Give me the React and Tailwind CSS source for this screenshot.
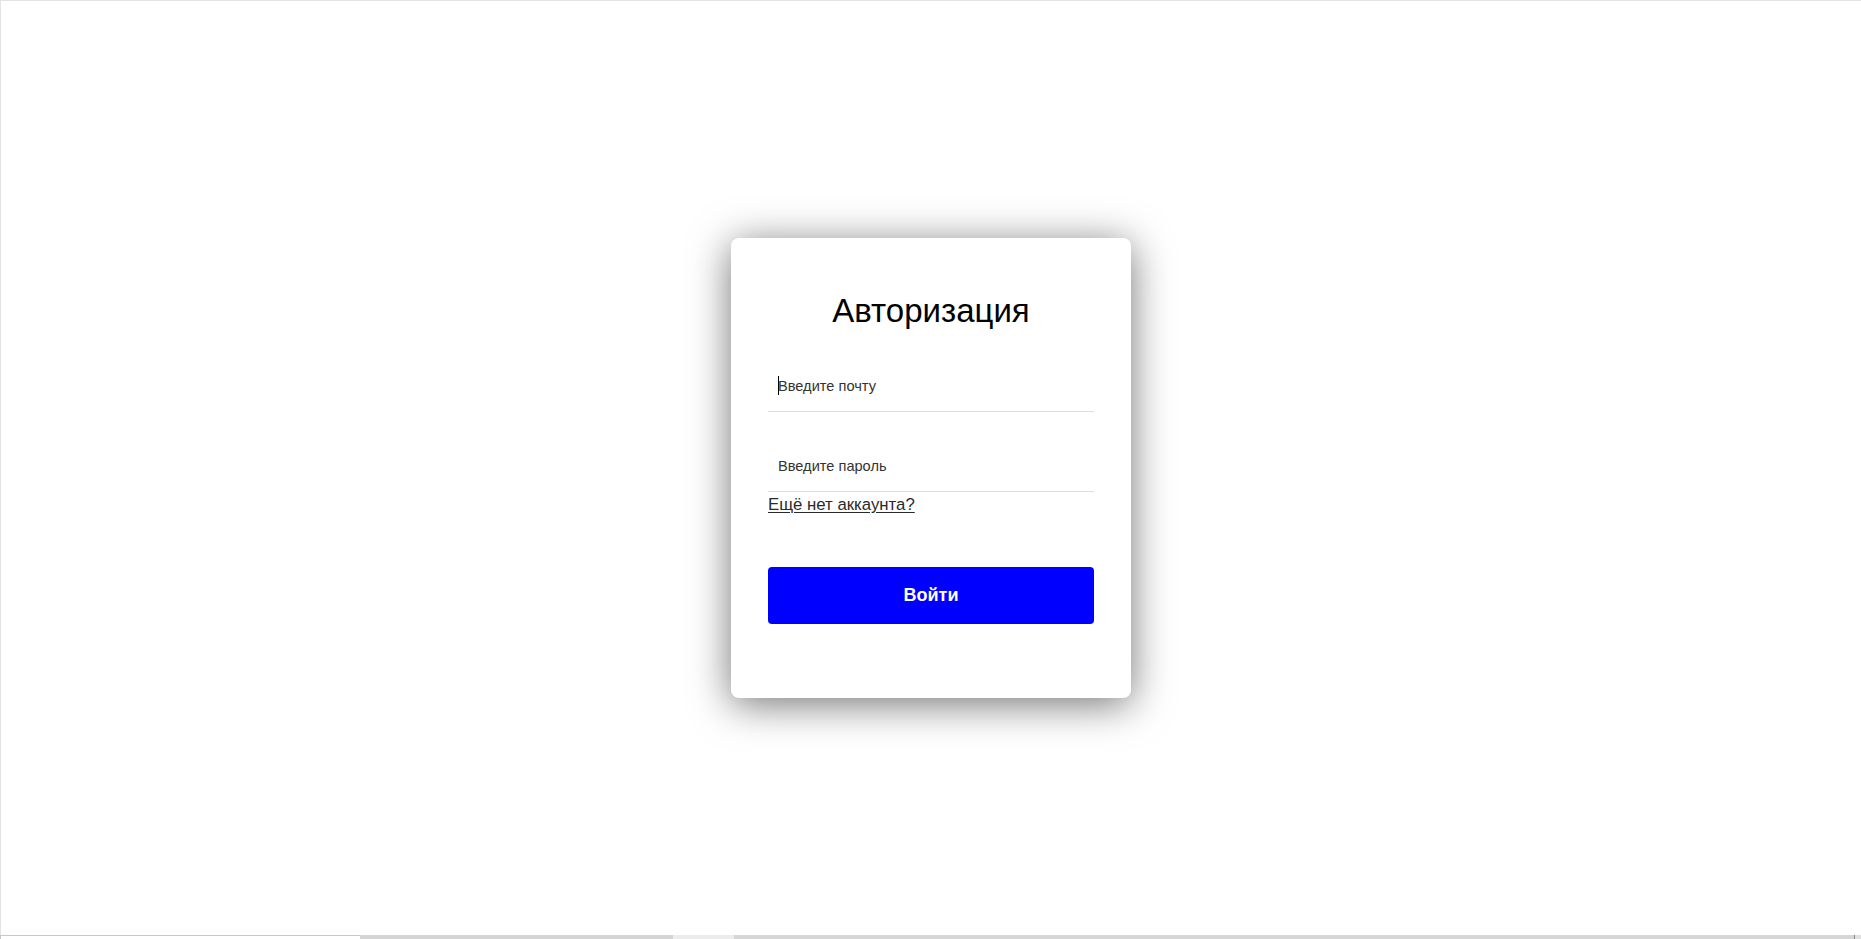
import React from "react";

export default function App() {
  return (
    <div
      className="w-[1861px] h-[939px] flex flex-col bg-white overflow-hidden"
      style={{ fontFamily: '"Liberation Sans", Arial, sans-serif' }}
    >
      <main className="flex-1 flex items-center justify-center border-t border-l border-[#e3e3e3]">
        <div className="w-[400px] h-[460px] bg-white rounded-[8px] shadow-[0_6px_40px_rgba(0,0,0,0.55)] px-[37px] pt-[53px] flex flex-col">
          <h1 className="text-[33px] leading-[40px] text-black text-center font-normal">
            Авторизация
          </h1>
          <div className="relative mt-[31px]">
            <input
              type="email"
              placeholder="Введите почту"
              className="w-full h-[50px] pl-[10px] pb-[2px] text-[14.6px] border-b border-[#dedede] outline-none placeholder:text-[#333] text-[#333]"
            />
            <span className="absolute left-[10px] top-[14px] w-px h-[19px] bg-black" />
          </div>
          <input
            type="password"
            placeholder="Введите пароль"
            className="mt-[30px] w-full h-[50px] pl-[10px] pb-[2px] text-[14.6px] border-b border-[#dedede] outline-none placeholder:text-[#333] text-[#333]"
          />
          <a
            href="#"
            className="mt-[3px] self-start text-[16.8px] leading-[19px] text-[#2a2a2a] underline underline-offset-[2px]"
          >
            Ещё нет аккаунта?
          </a>
          <button className="mt-[53px] w-full h-[57px] rounded-[4px] bg-[#0000ff] text-white text-[18px] font-bold">
            Войти
          </button>
        </div>
      </main>
      <div className="h-[4px] flex">
        <div className="w-[360px] border-t border-l border-[#c8c8c8] bg-white" />
        <div className="w-[313px] bg-[#d4d4d4]" />
        <div className="w-[61px] bg-[#ececec]" />
        <div className="flex-1 bg-[#d6d6d6]" />
        <div className="w-px bg-[#888]" />
        <div className="w-[6px] bg-[#e0e0e0]" />
      </div>
    </div>
  );
}
